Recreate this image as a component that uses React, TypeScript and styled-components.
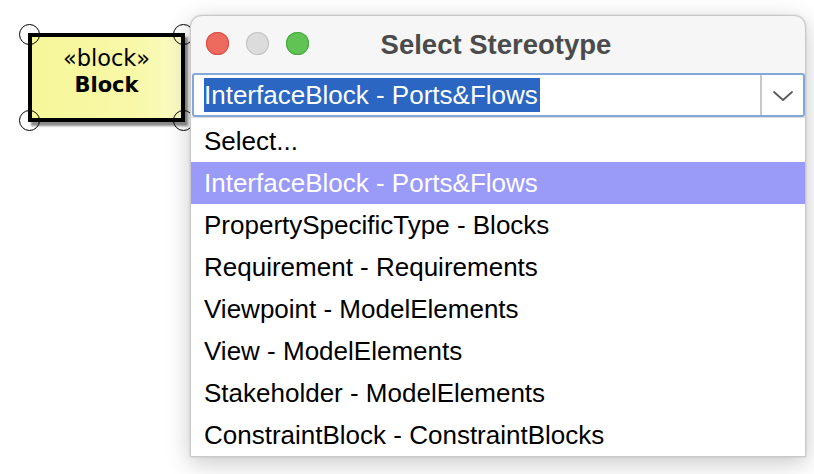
import React, { useState } from "react";
import styled, { createGlobalStyle } from "styled-components";

const GlobalStyle = createGlobalStyle`
  html, body {
    margin: 0;
    padding: 0;
    background: #ffffff;
  }
  body {
    width: 814px;
    height: 474px;
    overflow: hidden;
    font-family: "Liberation Sans", Arial, sans-serif;
  }
`;

const options = [
  "Select...",
  "InterfaceBlock - Ports&Flows",
  "PropertySpecificType - Blocks",
  "Requirement - Requirements",
  "Viewpoint - ModelElements",
  "View - ModelElements",
  "Stakeholder - ModelElements",
  "ConstraintBlock - ConstraintBlocks",
];

const App = () => {
  const [selected, setSelected] = useState<number>(1);
  return (
    <>
      <GlobalStyle />
      <Desktop>
        <BlockNode>
          <Stereo>«block»</Stereo>
          <BlockName>Block</BlockName>
          <Handle $x="left" $y="top" />
          <Handle $x="right" $y="top" />
          <Handle $x="left" $y="bottom" />
          <Handle $x="right" $y="bottom" />
        </BlockNode>

        <Window>
          <TitleBar>
            <Lights>
              <Light $color="#ee6a5f" $border="#d65147" />
              <Light $color="#dcdcdc" $border="#c4c4c4" />
              <Light $color="#5fc454" $border="#4aa83f" />
            </Lights>
            <Title>Select Stereotype</Title>
          </TitleBar>

          <Combo>
            <ComboField>
              <SelectedText>{options[selected]}</SelectedText>
            </ComboField>
            <ComboButton>
              <svg width="22" height="14" viewBox="0 0 22 14">
                <path
                  d="M2 3 L11 11 L20 3"
                  fill="none"
                  stroke="#5a5a5a"
                  strokeWidth="1.8"
                  strokeLinecap="round"
                  strokeLinejoin="round"
                />
              </svg>
            </ComboButton>
          </Combo>

          <List>
            {options.map((o, i) => (
              <Item key={o} $active={i === selected} onClick={() => setSelected(i)}>
                {o}
              </Item>
            ))}
          </List>
        </Window>
      </Desktop>
    </>
  );
};

const Desktop = styled.div`
  position: relative;
  width: 814px;
  height: 474px;
  background: #ffffff;
`;

const BlockNode = styled.div`
  position: absolute;
  left: 28px;
  top: 33px;
  width: 149px;
  height: 69px;
  padding-bottom: 12px;
  border: 4px solid #000;
  background: linear-gradient(to right, #f6f69a 0%, #f8f8a8 70%, #fbfbc6 100%);
  box-shadow: 3px 4px 2px rgba(0, 0, 0, 0.45);
  display: flex;
  flex-direction: column;
  align-items: center;
  justify-content: center;
  font-family: "DejaVu Sans", "Noto Sans", sans-serif;
  color: #000;
`;

const Stereo = styled.div`
  font-size: 22.5px;
  line-height: 27px;
`;

const BlockName = styled.div`
  font-size: 21px;
  line-height: 27px;
  font-weight: 700;
`;

const Handle = styled.div<{ $x: "left" | "right"; $y: "top" | "bottom" }>`
  position: absolute;
  width: 19px;
  height: 19px;
  border: 1.5px solid #000;
  border-radius: 50%;
  ${(p) => (p.$x === "left" ? "left: -13px;" : "right: -13px;")}
  ${(p) => (p.$y === "top" ? "top: -13px;" : "bottom: -13px;")}
`;

const Window = styled.div`
  position: absolute;
  left: 190px;
  top: 15px;
  width: 614px;
  display: flex;
  flex-direction: column;
  background: #f6f6f6;
  border: 1px solid #c9c9c9;
  border-radius: 12px 12px 0 0;
  box-shadow: 0 6px 24px rgba(0, 0, 0, 0.22), 0 0 2px rgba(0, 0, 0, 0.2);
  z-index: 2;
`;

const TitleBar = styled.div`
  position: relative;
  height: 57px;
  display: flex;
  align-items: center;
  justify-content: center;
`;

const Lights = styled.div`
  position: absolute;
  left: 15px;
  top: 16px;
  display: flex;
  gap: 17px;
`;

const Light = styled.span<{ $color: string; $border: string }>`
  width: 23px;
  height: 23px;
  border-radius: 50%;
  background: ${(p) => p.$color};
  box-shadow: inset 0 0 0 1px ${(p) => p.$border};
`;

const Title = styled.div`
  font-size: 27.5px;
  font-weight: 700;
  color: #4b4b4b;
  margin-right: 4px;
`;

const Combo = styled.div`
  height: 44px;
  margin: 0 0 0 1px;
  display: flex;
  background: #fff;
  border: 2px solid #80a9da;
  border-radius: 3px;
  box-sizing: border-box;
`;

const ComboField = styled.div`
  flex: 1;
  display: flex;
  align-items: center;
  padding-left: 10px;
`;

const SelectedText = styled.span`
  background: #2a66c2;
  color: #fff;
  font-size: 26px;
  line-height: 34px;
  padding-right: 2px;
`;

const ComboButton = styled.div`
  width: 41px;
  border-left: 2px solid #c8c8c8;
  display: flex;
  align-items: center;
  justify-content: center;
  padding-top: 2px;
`;

const List = styled.div`
  background: #fff;
  border-top: 1px solid #dcdcdc;
  padding-top: 2px;
  display: flex;
  flex-direction: column;
`;

const Item = styled.div<{ $active: boolean }>`
  height: 42px;
  display: flex;
  align-items: center;
  padding-left: 13px;
  font-size: 26px;
  color: ${(p) => (p.$active ? "#ffffff" : "#000000")};
  background: ${(p) => (p.$active ? "#9a9af8" : "transparent")};
  cursor: default;
`;

export default App;
